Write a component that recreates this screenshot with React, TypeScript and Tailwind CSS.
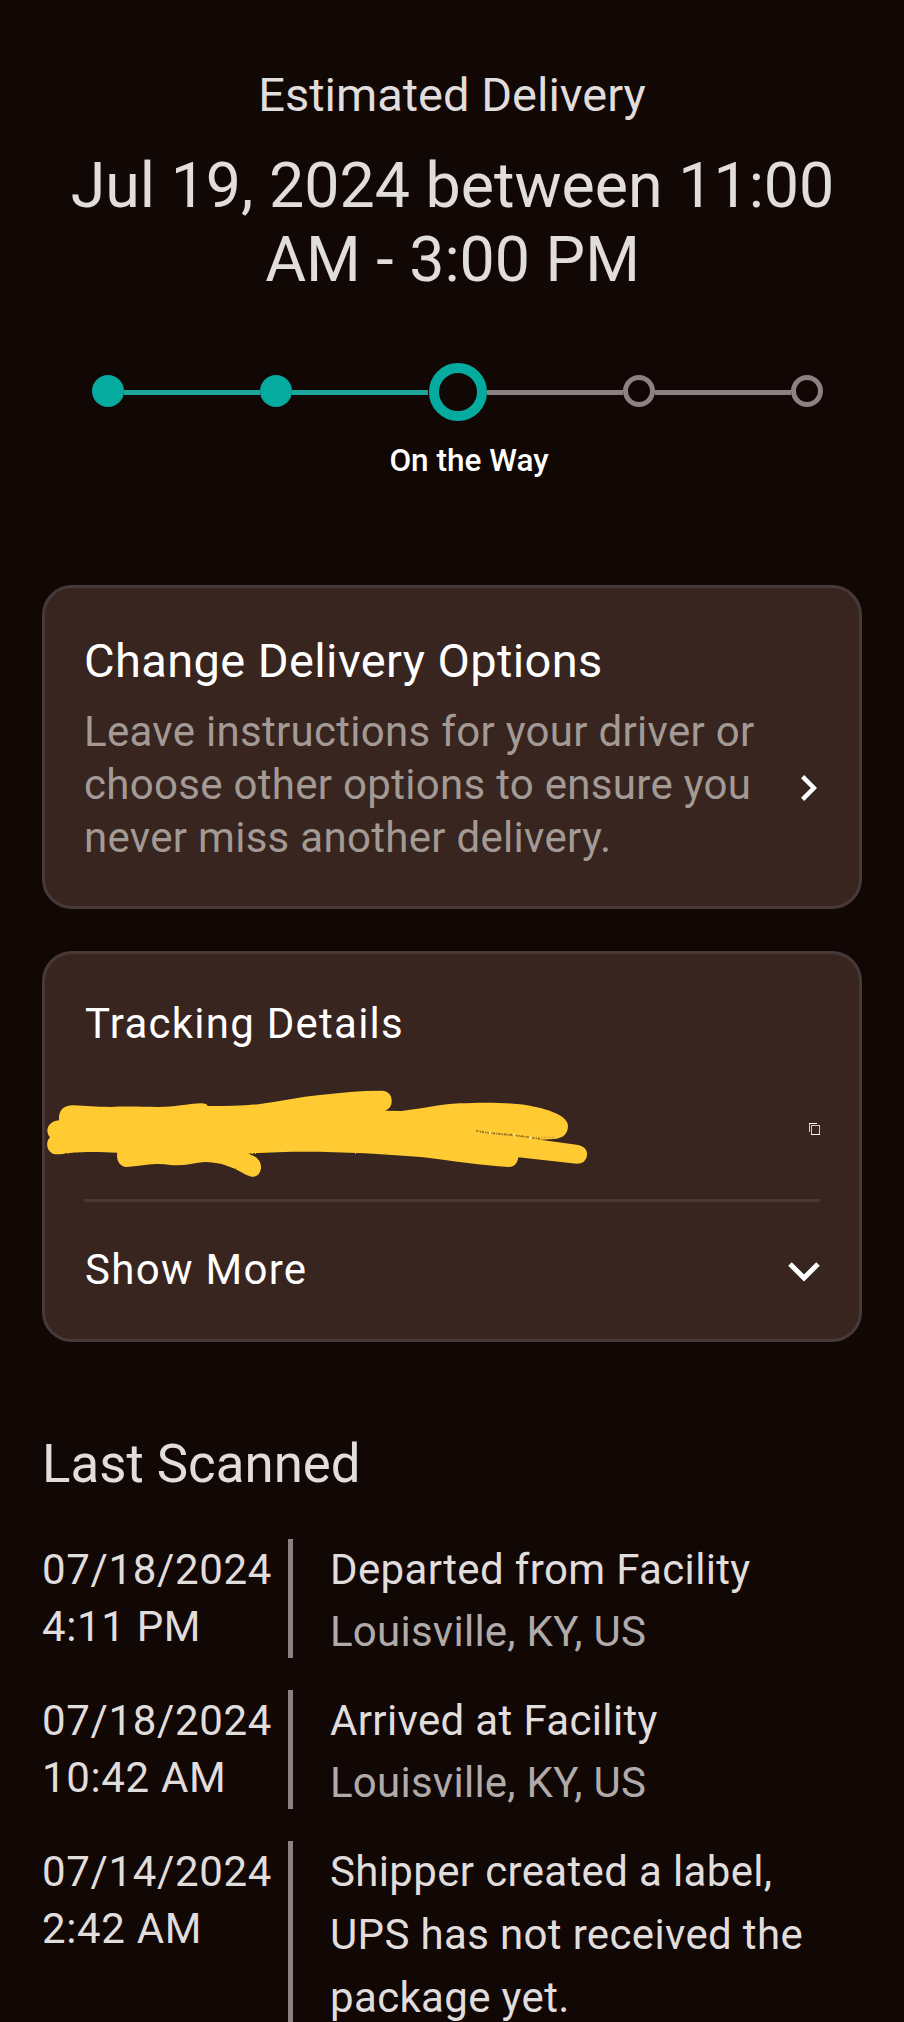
import React from 'react';
import clsx from 'clsx';

interface ScanEvent {
  date: string;
  time: string;
  title: React.ReactNode;
  location?: string;
}

const events: ScanEvent[] = [
  { date: '07/18/2024', time: '4:11 PM', title: 'Departed from Facility', location: 'Louisville, KY, US' },
  { date: '07/18/2024', time: '10:42 AM', title: 'Arrived at Facility', location: 'Louisville, KY, US' },
  {
    date: '07/14/2024',
    time: '2:42 AM',
    title: <>Shipper created a label,<br />UPS has not received the<br />package yet.</>,
  },
];

const Connector: React.FC<{ done?: boolean }> = ({ done }) => (
  <div className={clsx('h-[5px] flex-1', done ? 'bg-[#1da69b]' : 'bg-[#8c8281]')} />
);

const Progress = () => (
  <div className="ml-[92px] mr-[81px] mt-[66px] flex h-[58px] items-center">
    <div className="-mt-0.5 size-8 rounded-full bg-[#06aba0]" />
    <Connector done />
    <div className="-mt-0.5 size-8 rounded-full bg-[#06aba0]" />
    <Connector done />
    <div className="ml-px size-[58px] rounded-full border-[10.5px] border-[#06aba0]" />
    <Connector />
    <div className="-mt-0.5 size-8 rounded-full border-[5px] border-[#8c8281]" />
    <Connector />
    <div className="-mt-0.5 size-8 rounded-full border-[5px] border-[#8c8281]" />
  </div>
);

const CopyIcon = () => (
  <svg width="11" height="12" viewBox="0 0 11 12" fill="none">
    <path d="M0 .5h8" stroke="#fff" />
    <path d="M.5 1v8" stroke="#d6cfcc" />
    <path d="M2.5 2v10M10.5 2v10" stroke="#d6cfcc" />
    <path d="M2 2.5h9" stroke="#d6cfcc" />
    <path d="M2 11.5h9" stroke="#fff" />
  </svg>
);

// marker strokes hiding the tracking number
const Scribble = () => (
  <svg className="-ml-[38px] mt-[8px] h-[89px] w-[543px] shrink-0" viewBox="18 28 1629 267" fill="none">
    <filter id="rough" x="-2%" y="-5%" width="104%" height="110%">
      <feTurbulence type="fractalNoise" baseFrequency="0.8" numOctaves="1" seed="4" />
      <feDisplacementMap in="SourceGraphic" scale="5" />
    </filter>
    <path
      filter="url(#rough)"
      fill="#ffca31"
      d="M57 122C55 95 68 77 100 77C140 78 165 82 210 82C260 79 300 81 350 82C400 83 440 73 485 71Q500 71 503 79C560 79 610 79 660 73C720 65 780 52 840 46C900 39 960 33 1025 33C1048 34 1056 50 1055 65C1055 80 1047 89 1035 93L1085 94C1140 88 1200 74 1260 71C1320 68 1390 68 1440 74C1510 83 1583 105 1584 138C1584 162 1570 176 1540 178L1500 180L1610 195C1632 198 1642 210 1641 225C1640 242 1628 252 1610 252L1435 233C1432 250 1425 262 1407 262C1320 257 1250 245 1150 233C1050 223 900 216 800 216C730 216 680 218 625 222C652 230 664 246 663 264C661 282 652 291 636 291C620 290 605 276 580 266C550 252 525 248 495 247C460 250 430 260 390 256C350 249 320 257 260 262C238 260 228 240 232 219C180 216 120 216 90 220C65 223 52 226 38 222C18 212 17 186 30 173C15 158 20 126 57 122Z"
    />
    <path d="M1308 153L1350 160L1422 166L1500 178" stroke="#6d5020" strokeWidth="5" strokeDasharray="7 4 3 3" opacity=".75" />
    <path d="M1320 158L1400 167L1480 173L1545 173" stroke="#9c7a29" strokeWidth="3" strokeDasharray="3 5" />
    <path d="M1350 154v10M1423 161v11M1474 170l-5 9" stroke="#ffdd7d" strokeWidth="7" />
  </svg>
);

const card = 'mx-[42px] shrink-0 rounded-[30px] border-[3px] border-[#473938] bg-[#38251f]';

export default function App() {
  return (
    <main className="flex h-[2022px] w-[904px] flex-col overflow-hidden whitespace-nowrap bg-[#110705] pt-[67px] font-['Roboto',sans-serif] text-[#e0dddc]">
      <h2 className="shrink-0 text-center text-[47px] leading-[56px]">Estimated Delivery</h2>
      <h1 className="mt-[26px] shrink-0 pl-px text-center text-[62.7px] leading-[74px]">
        Jul 19, 2024 between 11:00
        <br />
        AM - 3:00 PM
      </h1>

      <Progress />
      <p className="mt-[21px] pl-[34px] text-center text-[31.5px] font-medium leading-[38px] text-white">On the Way</p>

      <section className={clsx(card, 'mt-[105px] h-[324px] px-[39px] pt-[45px]')}>
        <h3 className="text-[47px] leading-[56px] tracking-[0.39px] text-white">Change Delivery Options</h3>
        <div className="mt-4 flex items-center justify-between">
          <p className="text-[42px] leading-[53px] tracking-[0.3px] text-[#a39a96]">
            Leave instructions for your driver or
            <br />
            choose other options to ensure you
            <br />
            never miss another delivery.
          </p>
          <svg className="mr-[3px] mt-[7px]" width="16" height="26" viewBox="0 0 16 26" fill="none">
            <path d="M1.6 1.6L12.9 13L1.6 24.4" stroke="#fff" strokeWidth="4.4" />
          </svg>
        </div>
      </section>

      <section className={clsx(card, 'mt-[42px] h-[391px] px-[39px] pt-[45px] text-[42px] leading-[50px] text-white')}>
        <h3 className="pl-px tracking-[1.25px]">Tracking Details</h3>
        <div className="flex h-[150px] items-center justify-between pt-[10px]">
          <Scribble />
          <CopyIcon />
        </div>
        <div className="h-[3px] bg-[#473938]" />
        <div className="mt-[43px] flex items-center justify-between">
          <span className="pl-px tracking-[1.3px]">Show More</span>
          <svg className="mt-[4px]" width="32" height="20" viewBox="0 0 32 20" fill="none">
            <path d="M2 2L16 16L30 2" stroke="#fff" strokeWidth="5" />
          </svg>
        </div>
      </section>

      <section className="shrink-0 pl-[42px] pt-[91px]">
        <h2 className="text-[52.8px] leading-[62px]">Last Scanned</h2>
        <div className="mt-[44px] flex flex-col gap-8 text-[42px]">
          {events.map((event) => (
            <div key={event.date + event.time} className={clsx('flex', event.location ? 'h-[119px]' : 'h-[200px]')}>
              <div className="w-[246px] shrink-0 pt-[2px] leading-[57px] tracking-[0.65px]">
                <p>{event.date}</p>
                <p>{event.time}</p>
              </div>
              <div className="w-[5px] shrink-0 bg-[#8c8281]" />
              <div className="-mt-px pl-[37px] leading-[63px] tracking-[0.35px]">
                <p>{event.title}</p>
                {event.location && <p className="-mt-px tracking-[0.25px] text-[#b0abaa]">{event.location}</p>}
              </div>
            </div>
          ))}
        </div>
      </section>
    </main>
  );
}
